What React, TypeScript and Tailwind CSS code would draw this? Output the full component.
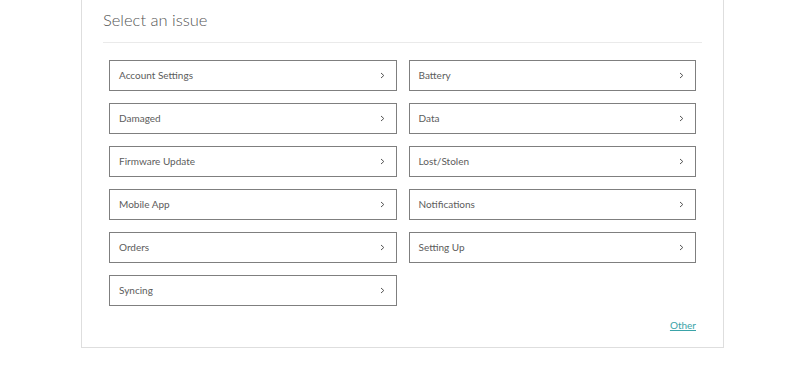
const issues = [
  'Account Settings',
  'Battery',
  'Damaged',
  'Data',
  'Firmware Update',
  'Lost/Stolen',
  'Mobile App',
  'Notifications',
  'Orders',
  'Setting Up',
  'Syncing',
]

function IssueButton({ label }: { label: string }) {
  return (
    <button className="flex h-[31px] items-center justify-between border border-[#7f7f7f] bg-white pl-[9px] pr-[11px] text-left text-[10px] text-[#5c5c5c]">
      <span>{label}</span>
      <svg width="5" height="7" viewBox="0 0 5 7" className="text-[#555]">
        <path d="M1 1 L3.8 3.5 L1 6" fill="none" stroke="currentColor" strokeWidth="1" />
      </svg>
    </button>
  )
}

export default function App() {
  return (
    <div className="h-[372px] overflow-hidden bg-white" style={{ fontFamily: 'Lato, "Open Sans", sans-serif' }}>
      <div className="-mt-[10px] ml-[81px] w-[643px] border border-[#dedede] px-[21px] pt-[17px] pb-[15px]">
        <h2 className="h-[24px] text-[16.5px] font-light leading-[24px] text-[#555]">Select an issue</h2>
        <div className="mt-[10px] border-b border-[#eaeaea]" />

        <div className="mt-[17px] grid grid-cols-2 gap-x-[12px] gap-y-[12px] px-[6px]">
          {issues.map((issue) => (
            <IssueButton key={issue} label={issue} />
          ))}
        </div>

        <div className="mt-[12px] flex justify-end pr-[6px]">
          <a href="#" className="text-[10px] leading-[14px] text-[#3aa3a8] underline">
            Other
          </a>
        </div>
      </div>
    </div>
  )
}
